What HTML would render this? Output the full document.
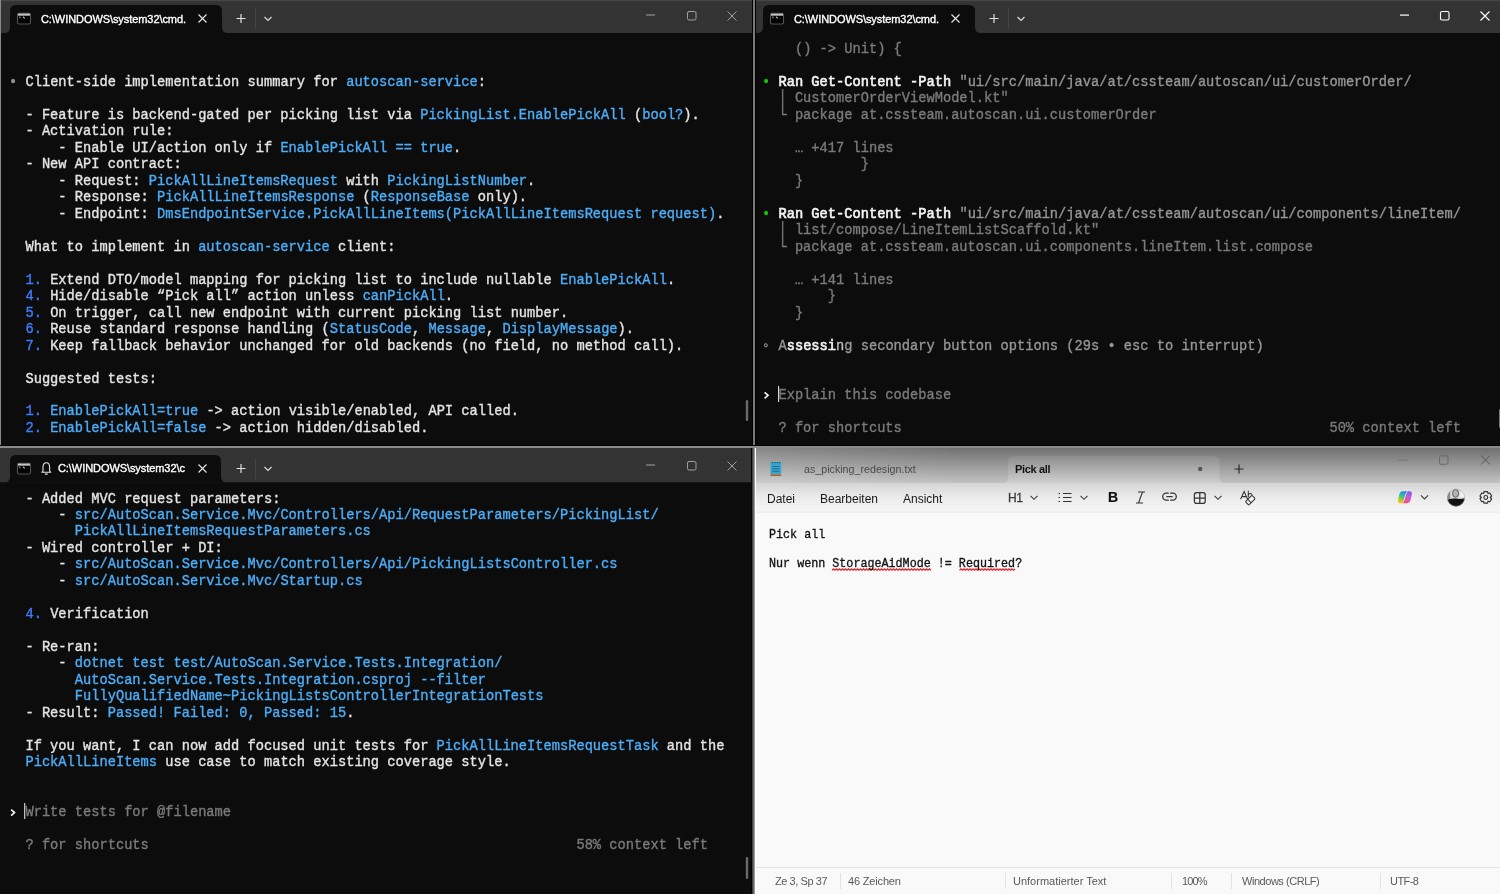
<!DOCTYPE html>
<html><head><meta charset="utf-8">
<style>
html,body{margin:0;padding:0;width:1500px;height:894px;overflow:hidden;background:#0c0c0c}
*{box-sizing:border-box}
.win{position:absolute;overflow:hidden;background:#0c0c0c}
.tl{position:absolute;white-space:pre;font-family:"Liberation Mono",monospace;font-size:13.717px;line-height:16.48px;height:16.48px;color:#e4e4e4}
.tl i{font-style:normal}
.ed{will-change:transform;-webkit-text-stroke:0.3px #111;transform:scaleY(1.08);transform-origin:0 10px}
.tt{will-change:transform;-webkit-text-stroke:0.35px currentColor;transform:scaleY(1.1);transform-origin:0 11px}
.b{color:#4cadf7}
.n{color:#3f7cff}
.d{color:#7a7a7a}
.m{color:#959595}
.l{color:#bdbdbd}
.w{color:#f4f4f4;-webkit-text-stroke:0.6px currentColor}
.g{color:#16c60c}
svg{position:absolute;left:0;top:0;overflow:visible}
.ttl{position:absolute;will-change:transform;font-family:"Liberation Sans",sans-serif;font-size:11px;-webkit-text-stroke:0.35px #fff;letter-spacing:-0.07px;color:#fff;white-space:pre;line-height:14px}
.np{position:absolute;will-change:transform;font-family:"Liberation Sans",sans-serif;white-space:pre}
</style></head><body>

<!-- top-left terminal -->
<div class="win" style="left:0;top:-2px;width:753px;height:447px">
 <svg width="753" height="447">
  <rect x="0" y="0" width="753" height="35" fill="#333333"/>
  <rect x="0" y="2" width="753" height="1.2" fill="#464646"/>
  <path d="M4 35 Q10 35 10 29 L10 13 Q10 7 16 7 L216 7 Q222 7 222 13 L222 29 Q222 35 228 35 Z" fill="#0c0c0c"/>
  <rect x="0" y="35" width="753" height="412" fill="#0c0c0c"/>
  <!-- tab icon -->
  <rect x="17.5" y="15.3" width="13" height="10.7" rx="1.6" fill="#000" stroke="#555" stroke-width="1.1"/>
  <rect x="18" y="15.6" width="12" height="2.1" fill="#c4c4c4"/>
  <path d="M19.2 18.6 h1.3 v1.6 h-1.3 Z" fill="#8a8a8a"/>
  <path d="M23 18.8 L24.8 20.4" stroke="#b8b8b8" stroke-width="1.2"/>
  <path d="M26 20.6 Q27.3 19.4 28.6 20.6 Z" fill="#666"/>
  <!-- close X -->
  <path d="M198.5 16.5 L206.5 24.5 M206.5 16.5 L198.5 24.5" stroke="#e8e8e8" stroke-width="1.1"/>
  <path d="M241 16 V25 M236.5 20.5 H245.5" stroke="#e0e0e0" stroke-width="1.2"/>
  <rect x="255" y="10" width="1" height="21" fill="#444"/>
  <path d="M264.5 19 L268 22.5 L271.5 19" stroke="#e0e0e0" stroke-width="1.1" fill="none"/>
  <!-- window controls -->
  <rect x="646" y="16.5" width="9" height="1" fill="#a0a0a0"/>
  <rect x="687.5" y="13.5" width="8.5" height="8.5" rx="1.5" fill="none" stroke="#a0a0a0" stroke-width="1"/>
  <path d="M727.5 13.5 L736.5 22.5 M736.5 13.5 L727.5 22.5" stroke="#a0a0a0" stroke-width="1"/>
  <!-- scrollbar -->
  <rect x="745.8" y="402" width="2.4" height="21" rx="1.2" fill="#6a6a6a"/>
 </svg>
 <div class="ttl" style="left:40.5px;top:14px">C:\WINDOWS\system32\cmd.</div>
</div>
<div style="position:absolute;left:0;top:0;width:1px;height:894px;background:#8a8a8a"></div>

<!-- top-right terminal -->
<div class="win" style="left:753px;top:-2px;width:747px;height:447px">
 <svg width="747" height="447">
  <rect x="0" y="0" width="747" height="35" fill="#333333"/>
  <rect x="0" y="2" width="747" height="1.2" fill="#464646"/>
  <path d="M4 35 Q10 35 10 29 L10 13 Q10 7 16 7 L216 7 Q222 7 222 13 L222 29 Q222 35 228 35 Z" fill="#0c0c0c"/>
  <rect x="0" y="35" width="747" height="412" fill="#0c0c0c"/>
  <rect x="17.5" y="15.3" width="13" height="10.7" rx="1.6" fill="#000" stroke="#555" stroke-width="1.1"/>
  <rect x="18" y="15.6" width="12" height="2.1" fill="#c4c4c4"/>
  <path d="M19.2 18.6 h1.3 v1.6 h-1.3 Z" fill="#8a8a8a"/>
  <path d="M23 18.8 L24.8 20.4" stroke="#b8b8b8" stroke-width="1.2"/>
  <path d="M26 20.6 Q27.3 19.4 28.6 20.6 Z" fill="#666"/>
  <path d="M198.5 16.5 L206.5 24.5 M206.5 16.5 L198.5 24.5" stroke="#e8e8e8" stroke-width="1.1"/>
  <path d="M241 16 V25 M236.5 20.5 H245.5" stroke="#e0e0e0" stroke-width="1.2"/>
  <rect x="255" y="10" width="1" height="21" fill="#444"/>
  <path d="M264.5 19 L268 22.5 L271.5 19" stroke="#e0e0e0" stroke-width="1.1" fill="none"/>
  <rect x="647" y="16.5" width="9" height="1.2" fill="#ffffff"/>
  <rect x="687.5" y="13.5" width="8.5" height="8.5" rx="1.5" fill="none" stroke="#ffffff" stroke-width="1.1"/>
  <path d="M727.5 13.5 L736.5 22.5 M736.5 13.5 L727.5 22.5" stroke="#ffffff" stroke-width="1.1"/>
  <rect x="746" y="411" width="2.4" height="19" rx="1.2" fill="#7a7a7a"/>
  <rect x="25" y="388" width="1.1" height="16" fill="#d8d8d8"/>
 </svg>
 <div class="ttl" style="left:41px;top:14px">C:\WINDOWS\system32\cmd.</div>
</div>

<!-- bottom-left terminal -->
<div class="win" style="left:0;top:448px;width:753px;height:446px">
 <svg width="753" height="446">
  <rect x="0" y="0" width="753" height="34.5" fill="#333333"/>
  <path d="M4 34.5 Q10 34.5 10 28.5 L10 13 Q10 7 16 7 L215 7 Q221 7 221 13 L221 28.5 Q221 34.5 227 34.5 Z" fill="#0c0c0c"/>
  <rect x="0" y="34.5" width="753" height="412" fill="#0c0c0c"/>
  <rect x="17.5" y="15.3" width="13" height="10.7" rx="1.6" fill="#000" stroke="#555" stroke-width="1.1"/>
  <rect x="18" y="15.6" width="12" height="2.1" fill="#c4c4c4"/>
  <path d="M19.2 18.6 h1.3 v1.6 h-1.3 Z" fill="#8a8a8a"/>
  <path d="M23 18.8 L24.8 20.4" stroke="#b8b8b8" stroke-width="1.2"/>
  <path d="M26 20.6 Q27.3 19.4 28.6 20.6 Z" fill="#666"/>
  <!-- bell -->
  <path d="M43 23 V19.5 Q43 14.8 46.3 14.8 Q49.6 14.8 49.6 19.5 V23 L50.8 24.3 H41.8 Z M45 25.6 Q46.3 26.9 47.6 25.6" stroke="#e6e6e6" stroke-width="1.1" fill="none" stroke-linejoin="round"/>
  <path d="M198.5 16.5 L206.5 24.5 M206.5 16.5 L198.5 24.5" stroke="#e8e8e8" stroke-width="1.1"/>
  <path d="M241 16 V25 M236.5 20.5 H245.5" stroke="#e0e0e0" stroke-width="1.2"/>
  <rect x="255" y="10" width="1" height="21" fill="#444"/>
  <path d="M264.5 19 L268 22.5 L271.5 19" stroke="#e0e0e0" stroke-width="1.1" fill="none"/>
  <rect x="646" y="16.5" width="9" height="1" fill="#a0a0a0"/>
  <rect x="687.5" y="13.5" width="8.5" height="8.5" rx="1.5" fill="none" stroke="#a0a0a0" stroke-width="1"/>
  <path d="M727.5 13.5 L736.5 22.5 M736.5 13.5 L727.5 22.5" stroke="#a0a0a0" stroke-width="1"/>
  <rect x="745.8" y="409" width="2.4" height="22" rx="1.2" fill="#6a6a6a"/>
  <rect x="24" y="355" width="1.3" height="16" fill="#bdbdbd"/>
 </svg>
 <div class="ttl" style="left:58px;top:13px">C:\WINDOWS\system32\c</div>
</div>

<!-- dividers -->
<div style="position:absolute;left:752px;top:0;width:1px;height:446px;background:#000"></div>
<div style="position:absolute;left:753px;top:0;width:2px;height:446px;background:#7a7a7a"></div>
<div style="position:absolute;left:755px;top:0;width:1px;height:446px;background:#000"></div>


<div class="tl tt" style="left:9.00px;top:74.95px"><i class="m">•</i> Client-side implementation summary for <i class="b">autoscan-service</i>:</div>
<div class="tl tt" style="left:9.00px;top:107.90px">  - Feature is backend-gated per picking list via <i class="b">PickingList.EnablePickAll</i> (<i class="b">bool?</i>).</div>
<div class="tl tt" style="left:9.00px;top:124.38px">  - Activation rule:</div>
<div class="tl tt" style="left:9.00px;top:140.86px">      - Enable UI/action only if <i class="b">EnablePickAll == true</i>.</div>
<div class="tl tt" style="left:9.00px;top:157.33px">  - New API contract:</div>
<div class="tl tt" style="left:9.00px;top:173.81px">      - Request: <i class="b">PickAllLineItemsRequest</i> with <i class="b">PickingListNumber</i>.</div>
<div class="tl tt" style="left:9.00px;top:190.28px">      - Response: <i class="b">PickAllLineItemsResponse</i> (<i class="b">ResponseBase</i> only).</div>
<div class="tl tt" style="left:9.00px;top:206.76px">      - Endpoint: <i class="b">DmsEndpointService.PickAllLineItems(PickAllLineItemsRequest request)</i>.</div>
<div class="tl tt" style="left:9.00px;top:239.71px">  What to implement in <i class="b">autoscan-service</i> client:</div>
<div class="tl tt" style="left:9.00px;top:272.66px">  <i class="n">1.</i> Extend DTO/model mapping for picking list to include nullable <i class="b">EnablePickAll</i>.</div>
<div class="tl tt" style="left:9.00px;top:289.14px">  <i class="n">4.</i> Hide/disable “Pick all” action unless <i class="b">canPickAll</i>.</div>
<div class="tl tt" style="left:9.00px;top:305.62px">  <i class="n">5.</i> On trigger, call new endpoint with current picking list number.</div>
<div class="tl tt" style="left:9.00px;top:322.09px">  <i class="n">6.</i> Reuse standard response handling (<i class="b">StatusCode</i>, <i class="b">Message</i>, <i class="b">DisplayMessage</i>).</div>
<div class="tl tt" style="left:9.00px;top:338.57px">  <i class="n">7.</i> Keep fallback behavior unchanged for old backends (no field, no method call).</div>
<div class="tl tt" style="left:9.00px;top:371.52px">  Suggested tests:</div>
<div class="tl tt" style="left:9.00px;top:404.47px">  <i class="n">1.</i> <i class="b">EnablePickAll=true</i> -&gt; action visible/enabled, API called.</div>
<div class="tl tt" style="left:9.00px;top:420.95px">  <i class="n">2.</i> <i class="b">EnablePickAll=false</i> -&gt; action hidden/disabled.</div>
<div class="tl tt" style="left:762.00px;top:42.00px">    <i class="d">() -&gt; Unit) {</i></div>
<div class="tl tt" style="left:762.00px;top:74.95px"><i class="g">•</i> <i class="w">Ran Get-Content -Path</i> <i class="m">&quot;ui/src/main/java/at/cssteam/autoscan/ui/customerOrder/</i></div>
<div class="tl tt" style="left:762.00px;top:91.43px">  <i class="d">│ CustomerOrderViewModel.kt&quot;</i></div>
<div class="tl tt" style="left:762.00px;top:107.90px">  <i class="d">└ package at.cssteam.autoscan.ui.customerOrder</i></div>
<div class="tl tt" style="left:762.00px;top:140.86px">    <i class="d">… +417 lines</i></div>
<div class="tl tt" style="left:762.00px;top:157.33px">            <i class="d">}</i></div>
<div class="tl tt" style="left:762.00px;top:173.81px">    <i class="d">}</i></div>
<div class="tl tt" style="left:762.00px;top:206.76px"><i class="g">•</i> <i class="w">Ran Get-Content -Path</i> <i class="m">&quot;ui/src/main/java/at/cssteam/autoscan/ui/components/lineItem/</i></div>
<div class="tl tt" style="left:762.00px;top:223.24px">  <i class="d">│ list/compose/LineItemListScaffold.kt&quot;</i></div>
<div class="tl tt" style="left:762.00px;top:239.71px">  <i class="d">└ package at.cssteam.autoscan.ui.components.lineItem.list.compose</i></div>
<div class="tl tt" style="left:762.00px;top:272.66px">    <i class="d">… +141 lines</i></div>
<div class="tl tt" style="left:762.00px;top:289.14px">        <i class="d">}</i></div>
<div class="tl tt" style="left:762.00px;top:305.62px">    <i class="d">}</i></div>
<div class="tl tt" style="left:762.00px;top:338.57px"><i class="m">◦</i> <i class="m">A</i><i class="w">ssessi</i><i class="l">n</i><i class="m">g secondary button options (29s • esc to interrupt)</i></div>
<div class="tl tt" style="left:762.00px;top:388.00px">  <i class="d">Explain this codebase</i></div>
<div class="tl tt" style="left:762.00px;top:420.95px">  <i class="d">? for shortcuts</i>                                                    <i class="d">50% context left</i></div>
<div class="tl tt" style="left:9.00px;top:491.50px">  - Added MVC request parameters:</div>
<div class="tl tt" style="left:9.00px;top:507.98px">      - <i class="b">src/AutoScan.Service.Mvc/Controllers/Api/RequestParameters/PickingList/</i></div>
<div class="tl tt" style="left:9.00px;top:524.45px">        <i class="b">PickAllLineItemsRequestParameters.cs</i></div>
<div class="tl tt" style="left:9.00px;top:540.93px">  - Wired controller + DI:</div>
<div class="tl tt" style="left:9.00px;top:557.40px">      - <i class="b">src/AutoScan.Service.Mvc/Controllers/Api/PickingListsController.cs</i></div>
<div class="tl tt" style="left:9.00px;top:573.88px">      - <i class="b">src/AutoScan.Service.Mvc/Startup.cs</i></div>
<div class="tl tt" style="left:9.00px;top:606.83px">  <i class="n">4.</i> Verification</div>
<div class="tl tt" style="left:9.00px;top:639.78px">  - Re-ran:</div>
<div class="tl tt" style="left:9.00px;top:656.26px">      - <i class="b">dotnet test test/AutoScan.Service.Tests.Integration/</i></div>
<div class="tl tt" style="left:9.00px;top:672.74px">        <i class="b">AutoScan.Service.Tests.Integration.csproj --filter</i></div>
<div class="tl tt" style="left:9.00px;top:689.21px">        <i class="b">FullyQualifiedName~PickingListsControllerIntegrationTests</i></div>
<div class="tl tt" style="left:9.00px;top:705.69px">  - Result: <i class="b">Passed! Failed: 0, Passed: 15</i>.</div>
<div class="tl tt" style="left:9.00px;top:738.64px">  If you want, I can now add focused unit tests for <i class="b">PickAllLineItemsRequestTask</i> and the</div>
<div class="tl tt" style="left:9.00px;top:755.12px">  <i class="b">PickAllLineItems</i> use case to match existing coverage style.</div>
<div class="tl tt" style="left:9.00px;top:804.54px">  <i class="d">Write tests for @filename</i></div>
<div class="tl tt" style="left:9.00px;top:837.50px">  <i class="d">? for shortcuts</i>                                                    <i class="d">58% context left</i></div>
<svg width="1500" height="894" style="position:absolute;left:0;top:0"><path d="M764.6 392.3 L768 395.3 L764.6 398.3" stroke="#f2f2f2" stroke-width="1.7" fill="none"/><path d="M11.1 809.6 L14.5 812.6 L11.1 815.6" stroke="#f2f2f2" stroke-width="1.7" fill="none"/></svg>

<!-- notepad -->
<div class="win" style="left:755px;top:447px;width:745px;height:447px;background:#f9f9f9">
 <div style="position:absolute;left:0;top:0;width:745px;height:36px;background:linear-gradient(90deg,rgba(255,255,255,0.16),rgba(255,255,255,0) 28%),linear-gradient(#6e6e6e,#a0a0a0 60%,#c2c2c2)"></div>
 <svg width="745" height="447">
  <path d="M247 36 Q253 36 253 30 L253 15 Q253 9 259 9 L458.5 9 Q464.5 9 464.5 15 L464.5 30 Q464.5 36 470.5 36 Z" fill="url(#tabg)"/>
  <defs><linearGradient id="tabg" x1="0" y1="0" x2="0" y2="1"><stop offset="0" stop-color="#8c8c8c"/><stop offset="1" stop-color="#cfcfcf"/></linearGradient>
  <linearGradient id="menug" x1="0" y1="0" x2="0" y2="1"><stop offset="0" stop-color="#d4d4d4"/><stop offset="0.45" stop-color="#e9e9e9"/><stop offset="1" stop-color="#f6f6f6"/></linearGradient></defs>
  <rect x="0" y="36" width="745" height="28" fill="url(#menug)"/>
  <rect x="0" y="64.5" width="745" height="1" fill="#e6e6e6"/>
  <!-- notepad icon -->
  <rect x="15.4" y="15" width="10.9" height="12.4" rx="0.8" fill="#3aa6d0"/>
  <path d="M16.8 15.6 h1.3 M19.3 15.6 h1.3 M21.8 15.6 h1.3 M24.3 15.6 h1.1" stroke="#155a78" stroke-width="1.2"/>
  <path d="M17.3 19.4 H24.4 M17.3 21.8 H24.4 M17.3 24.2 H24.4" stroke="#1a6688" stroke-width="0.9"/>
  <rect x="15.4" y="27.6" width="10.9" height="1.5" rx="0.7" fill="#b55a1c"/>
  <!-- tab dot and plus -->
  <circle cx="445.2" cy="22" r="2.3" fill="#5a5a5a"/>
  <path d="M484 17.5 V26.5 M479.5 22 H488.5" stroke="#2a2a2a" stroke-width="1.2"/>
  <!-- window controls -->
  <rect x="643" y="12.5" width="10" height="1.2" fill="#7a7a7a"/>
  <rect x="684.5" y="8.8" width="8.5" height="8.5" rx="1.5" fill="none" stroke="#6a6a6a" stroke-width="1"/>
  <path d="M726 8.5 L735 17.5 M735 8.5 L726 17.5" stroke="#555" stroke-width="1"/>
  <!-- toolbar -->
  <path d="M275.5 48.8 L279 52.3 L282.5 48.8" stroke="#3c3c3c" stroke-width="1.1" fill="none"/>
  <path d="M303.5 46.5 h1.5 M303.5 50.5 h1.5 M303.5 54.5 h1.5 M308 46.5 H316.5 M308 50.5 H316.5 M308 54.5 H316.5" stroke="#333" stroke-width="1.1"/>
  <path d="M325.5 48.8 L329 52.3 L332.5 48.8" stroke="#3c3c3c" stroke-width="1.1" fill="none"/>
  <path d="M459.5 48.8 L463 52.3 L466.5 48.8" stroke="#3c3c3c" stroke-width="1.1" fill="none"/>
  <path d="M383 45 L390 45 M381 56 L388 56 M387.5 45 L383.5 56" stroke="#333" stroke-width="1.1" fill="none"/>
  <path d="M413.3 46.2 H411.2 A3.5 3.5 0 0 0 411.2 53.2 H413.3 M415.7 46.2 H417.8 A3.5 3.5 0 0 1 417.8 53.2 H415.7 M411.8 49.7 H417.2" stroke="#333" stroke-width="1.25" fill="none" stroke-linecap="round"/>
  <rect x="439.4" y="45.6" width="10.8" height="10.8" rx="2.2" fill="none" stroke="#333" stroke-width="1.25"/>
  <path d="M444.8 45.6 V56.4 M439.4 51 H450.2" stroke="#333" stroke-width="1.25"/>
  <path d="M485.6 52.2 L489.1 44.6 L492.6 52.2 M486.9 49.6 H491.3" stroke="#333" stroke-width="1.05" fill="none"/>
  <path d="M493.3 43.8 V50.2 M493.3 48.3 Q493.6 46.4 495.4 46.5 Q496.8 46.7 497 48" stroke="#333" stroke-width="1.05" fill="none"/>
  <g transform="translate(495.3 53.2) rotate(-45)"><rect x="-4.6" y="-2.4" width="9.2" height="4.8" rx="1" fill="#f2f2f2" stroke="#333" stroke-width="1.05"/><path d="M-1.2 -2.4 V2.4" stroke="#333" stroke-width="1"/></g>
  <path d="M665.9 48.4 L669.5 52 L673.1 48.4" stroke="#3c3c3c" stroke-width="1.1" fill="none"/>
  <!-- gear -->
  <g transform="translate(730.8 50.4)" fill="none" stroke="#333" stroke-width="1.15">
   <path d="M-1.77 -5.73 L1.77 -5.73 L2.16 -3.95 L2.34 -3.84 L4.08 -4.40 L5.85 -1.33 L4.50 -0.11 L4.50 0.11 L5.85 1.33 L4.08 4.40 L2.34 3.84 L2.16 3.95 L1.77 5.73 L-1.77 5.73 L-2.16 3.95 L-2.34 3.84 L-4.08 4.40 L-5.85 1.33 L-4.50 0.11 L-4.50 -0.11 L-5.85 -1.33 L-4.08 -4.40 L-2.34 -3.84 L-2.16 -3.95 Z" stroke-linejoin="round"/>
   <circle cx="0" cy="0" r="1.9"/>
  </g>
  <!-- avatar -->
  <clipPath id="avc"><circle cx="701" cy="50.6" r="8.8"/></clipPath>
  <g clip-path="url(#avc)">
   <rect x="692" y="41" width="18" height="19" fill="#dcdcdc"/>
   <rect x="692" y="41" width="3.2" height="19" fill="#8a8a8a"/>
   <path d="M706 42 L710 42 L710 50 L705 50 Z" fill="#f4f4f4"/>
   <path d="M697.6 47 Q697.6 42.6 700.6 42.6 Q703.6 42.6 703.6 46.6 Q703.6 49.8 700.6 50.3 Q697.6 49.8 697.6 47 Z" fill="#b5b5b5" stroke="#444" stroke-width="0.8"/>
   <path d="M692 53 Q696 50.8 701 51.6 Q706 52.4 710 51.2 L710 60 L692 60 Z" fill="#121212"/>
  </g>
  <circle cx="701" cy="50.6" r="8.6" fill="none" stroke="#9a9a9a" stroke-width="0.5"/>
  <!-- copilot -->
  <defs>
   <linearGradient id="cpa" gradientUnits="userSpaceOnUse" x1="9" y1="0" x2="1.5" y2="12"><stop offset="0" stop-color="#2f6cf2"/><stop offset="0.38" stop-color="#1fb1c6"/><stop offset="0.62" stop-color="#63cc4c"/><stop offset="0.9" stop-color="#f6c020"/></linearGradient>
   <linearGradient id="cpb" gradientUnits="userSpaceOnUse" x1="13.5" y1="1" x2="5" y2="12.5"><stop offset="0" stop-color="#6d5cf4"/><stop offset="0.4" stop-color="#c55ad9"/><stop offset="0.72" stop-color="#f0508e"/><stop offset="1" stop-color="#f4582a"/></linearGradient>
  </defs>
  <g transform="translate(642.7 43.8)">
   <path d="M5 0.4 L10 0.4 Q8.6 1.1 8 3.3 L6.4 9.2 Q5.8 11.4 4.3 12.4 L2.6 12.4 Q-0.1 12.4 0.3 9.4 L1.4 4 Q2.1 0.7 5 0.4 Z" fill="url(#cpa)"/>
   <path d="M9.4 12.4 L4.4 12.4 Q5.8 11.7 6.4 9.5 L8 3.6 Q8.6 1.4 10.1 0.4 L11.8 0.4 Q14.5 0.4 14.1 3.4 L13 8.8 Q12.3 12.1 9.4 12.4 Z" fill="url(#cpb)"/>
   <path d="M10 0.6 Q8.6 1.3 8 3.4 L6.4 9.3 Q5.8 11.4 4.4 12.2" stroke="#f4f4f4" stroke-width="0.7" fill="none"/>
  </g>
  <!-- status separators -->
  <rect x="85" y="426" width="1" height="16" fill="#e2e2e2"/>
  <rect x="250" y="426" width="1" height="16" fill="#e2e2e2"/>
  <rect x="416" y="426" width="1" height="16" fill="#e2e2e2"/>
  <rect x="476" y="426" width="1" height="16" fill="#e2e2e2"/>
  <rect x="625" y="426" width="1" height="16" fill="#e2e2e2"/>
  <rect x="0" y="420" width="745" height="1" fill="#e5e5e5"/>
  <!-- spell squiggles -->
  <path d="M77.0 123.2 l1.5 -1.3 l1.5 1.3 l1.5 -1.3 l1.5 1.3 l1.5 -1.3 l1.5 1.3 l1.5 -1.3 l1.5 1.3 l1.5 -1.3 l1.5 1.3 l1.5 -1.3 l1.5 1.3 l1.5 -1.3 l1.5 1.3 l1.5 -1.3 l1.5 1.3 l1.5 -1.3 l1.5 1.3 l1.5 -1.3 l1.5 1.3 l1.5 -1.3 l1.5 1.3 l1.5 -1.3 l1.5 1.3 l1.5 -1.3 l1.5 1.3 l1.5 -1.3 l1.5 1.3 l1.5 -1.3 l1.5 1.3 l1.5 -1.3 l1.5 1.3 l1.5 -1.3 l1.5 1.3 l1.5 -1.3 l1.5 1.3 l1.5 -1.3 l1.5 1.3 l1.5 -1.3 l1.5 1.3 l1.5 -1.3 l1.5 1.3 l1.5 -1.3 l1.5 1.3 l1.5 -1.3 l1.5 1.3 l1.5 -1.3 l1.5 1.3 l1.5 -1.3 l1.5 1.3 l1.5 -1.3 l1.5 1.3 l1.5 -1.3 l1.5 1.3 l1.5 -1.3 l1.5 1.3 l1.5 -1.3 l1.5 1.3 l1.5 -1.3 l1.5 1.3 l1.5 -1.3 l1.5 1.3 l1.5 -1.3 l1.5 1.3 l1.5 -1.3 l1.5 1.3" stroke="#e8262e" stroke-width="1.3" fill="none"/>
  <path d="M204.5 123.2 l1.5 -1.3 l1.5 1.3 l1.5 -1.3 l1.5 1.3 l1.5 -1.3 l1.5 1.3 l1.5 -1.3 l1.5 1.3 l1.5 -1.3 l1.5 1.3 l1.5 -1.3 l1.5 1.3 l1.5 -1.3 l1.5 1.3 l1.5 -1.3 l1.5 1.3 l1.5 -1.3 l1.5 1.3 l1.5 -1.3 l1.5 1.3 l1.5 -1.3 l1.5 1.3 l1.5 -1.3 l1.5 1.3 l1.5 -1.3 l1.5 1.3 l1.5 -1.3 l1.5 1.3 l1.5 -1.3 l1.5 1.3 l1.5 -1.3 l1.5 1.3 l1.5 -1.3 l1.5 1.3 l1.5 -1.3 l1.5 1.3 l1.5 -1.3" stroke="#e8262e" stroke-width="1.3" fill="none"/>
 </svg>
 <div class="np" style="left:48.8px;top:16.3px;font-size:10.7px;line-height:13px;color:#4a4a4a">as_picking_redesign.txt</div>
 <div class="np" style="left:260px;top:15.5px;font-size:11px;line-height:13px;color:#111;font-weight:bold;letter-spacing:-0.35px">Pick all</div>
 <div class="np" style="left:11.7px;top:44.8px;font-size:12px;line-height:14px;color:#1a1a1a">Datei</div>
 <div class="np" style="left:65.3px;top:44.8px;font-size:12px;line-height:14px;color:#1a1a1a">Bearbeiten</div>
 <div class="np" style="left:148.3px;top:44.8px;font-size:12px;line-height:14px;color:#1a1a1a">Ansicht</div>
 <div class="np" style="left:252.8px;top:44px;font-size:12px;line-height:14px;color:#3a3a3a;letter-spacing:-0.5px;-webkit-text-stroke:0.3px #3a3a3a">H1</div>
 <div class="np" style="left:352.6px;top:43px;font-size:14px;line-height:15px;color:#111;font-weight:bold;-webkit-text-stroke:0.2px #111">B</div>
 
 <div class="tl ed" style="left:13.5px;top:81.3px;font-size:11.72px;line-height:14px;color:#111">Pick all</div>
 <div class="tl ed" style="left:13.5px;top:110.4px;font-size:11.72px;line-height:14px;color:#111">Nur wenn StorageAidMode != Required?</div>
 <div class="np" style="left:19.5px;top:427px;font-size:11px;line-height:14px;color:#5a5a5a;letter-spacing:-0.43px">Ze 3, Sp 37</div>
 <div class="np" style="left:92.5px;top:427px;font-size:11px;line-height:14px;color:#5a5a5a;letter-spacing:-0.17px">46 Zeichen</div>
 <div class="np" style="left:257.5px;top:427px;font-size:11px;line-height:14px;color:#5a5a5a">Unformatierter Text</div>
 <div class="np" style="left:426.8px;top:427px;font-size:11px;line-height:14px;color:#5a5a5a;letter-spacing:-0.9px">100%</div>
 <div class="np" style="left:487.2px;top:427px;font-size:11px;line-height:14px;color:#5a5a5a;letter-spacing:-0.46px">Windows (CRLF)</div>
 <div class="np" style="left:635.2px;top:427px;font-size:11px;line-height:14px;color:#5a5a5a;letter-spacing:-0.55px">UTF-8</div>
</div>
<div style="position:absolute;left:751px;top:448px;width:5px;height:446px;background:linear-gradient(90deg,#000 0,#000 1px,#444 1px,#444 2px,#666 2px,#666 3px,#999 3px,#999 4px,#fff 4px)"></div>

<div style="position:absolute;left:0;top:445px;width:1500px;height:1px;background:#000"></div>
<div style="position:absolute;left:0;top:446px;width:1500px;height:2px;background:#8a8a8a"></div>
</body></html>
